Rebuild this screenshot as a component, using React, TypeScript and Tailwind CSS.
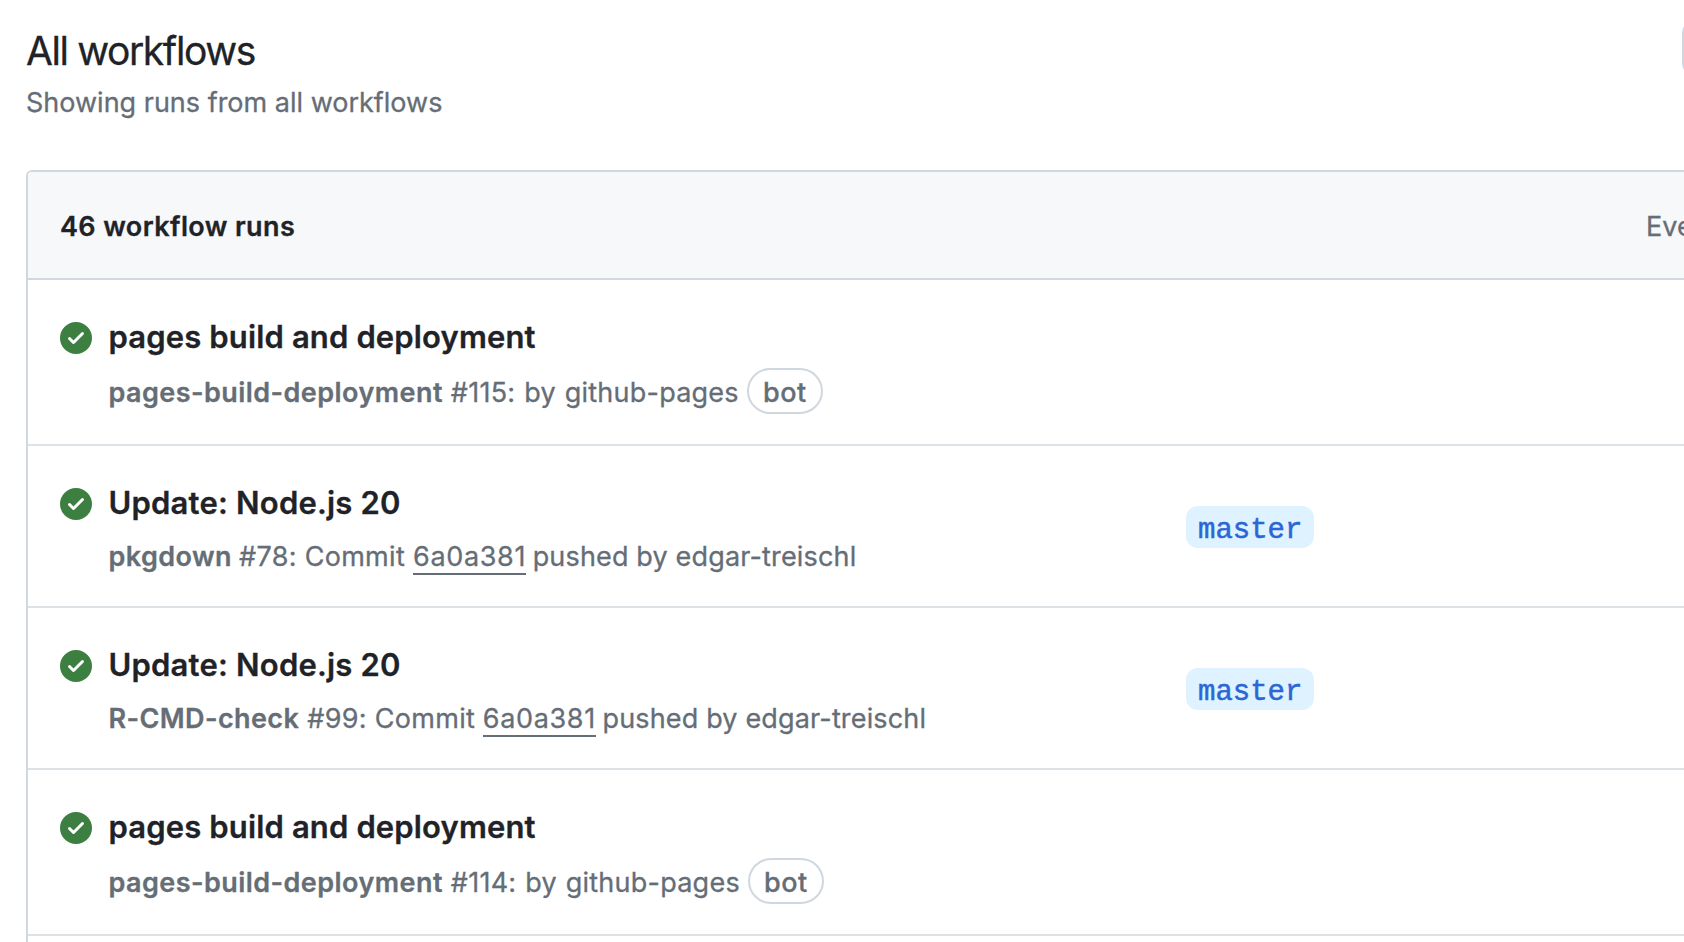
type Run = {
  title: string;
  workflow: string;
  detail: string;
  kind: "bot" | "commit";
  titleClass: string;
  workflowClass: string;
  detailClass: string;
};

const runs: Run[] = [
  {
    title: "pages build and deployment",
    workflow: "pages-build-deployment",
    detail: "#115: by github-pages",
    kind: "bot",
    titleClass: "tracking-[0.14px]",
    workflowClass: "tracking-[0.44px]",
    detailClass: "ml-[8px] w-[296px] tracking-[0.24px] [word-spacing:1px]",
  },
  {
    title: "Update: Node.js 20",
    workflow: "pkgdown",
    detail: "#78: Commit",
    kind: "commit",
    titleClass: "tracking-[0.2px]",
    workflowClass: "tracking-[0.4px]",
    detailClass: "ml-[7.2px] w-[174px] tracking-[0.3px]",
  },
  {
    title: "Update: Node.js 20",
    workflow: "R-CMD-check",
    detail: "#99: Commit",
    kind: "commit",
    titleClass: "tracking-[0.2px]",
    workflowClass: "tracking-[0.4px]",
    detailClass: "ml-[8px] w-[175.6px] tracking-[0.3px]",
  },
  {
    title: "pages build and deployment",
    workflow: "pages-build-deployment",
    detail: "#114: by github-pages",
    kind: "bot",
    titleClass: "tracking-[0.14px]",
    workflowClass: "tracking-[0.44px]",
    detailClass: "ml-[8px] w-[297px] tracking-[0.24px] [word-spacing:1px]",
  },
];

function SuccessIcon() {
  return (
    <svg viewBox="0 0 16 16" className="mt-[5px] mr-4 size-8 shrink-0 fill-[#3d7f40]" aria-hidden="true">
      <path d="M8 16A8 8 0 1 1 8 0a8 8 0 0 1 0 16Zm3.78-9.72a.751.751 0 0 0-.018-1.042.751.751 0 0 0-1.042-.018L6.75 9.19 5.28 7.72a.751.751 0 0 0-1.042.018.751.751 0 0 0-.018 1.042l2 2a.75.75 0 0 0 1.06 0Z" />
    </svg>
  );
}

function RunRow({ run }: { run: Run }) {
  const bot = run.kind === "bot";
  return (
    <li
      className={
        bot
          ? "flex h-[166px] items-start border-b-2 border-[#dde2e7] pl-8 pt-[37px]"
          : "flex h-[162px] items-start border-b-2 border-[#dde2e7] pl-8 pt-[37px]"
      }
    >
      <SuccessIcon />
      <div className="w-[1078px] shrink-0">
        <h2 className={`pl-[0.5px] text-[31px] leading-[40px] font-semibold text-[#1f2328] [-webkit-text-stroke:0.3px_#1f2328] ${run.titleClass}`}>
          {run.title}
        </h2>
        <div
          className={
            bot
              ? "mt-[11px] flex h-[46px] items-center pl-[0.5px] text-[27px] leading-[42px] whitespace-nowrap text-[#656d76] [-webkit-text-stroke:0.3px_#656d76]"
              : "mt-[9px] flex h-[46px] items-center pl-[0.5px] text-[27px] leading-[42px] whitespace-nowrap text-[#656d76] [-webkit-text-stroke:0.3px_#656d76]"
          }
        >
          <span className={`pt-[3px] font-semibold ${run.workflowClass}`}>{run.workflow}</span>
          <span className={`shrink-0 pt-[3px] ${run.detailClass}`}>{run.detail}</span>
          {bot ? (
            <span className="flex h-[46px] w-[76px] shrink-0 justify-center rounded-full border-2 border-[#d0d7de] pt-[2px] font-medium tracking-[0.5px]">
              bot
            </span>
          ) : (
            <>
              <a className="h-[43px] w-[113px] shrink-0 self-start border-b-2 border-[#656d76] pt-[4px] leading-[42px] tracking-[0.64px]">
                6a0a381
              </a>
              <span className="ml-[6.6px] pt-[3px] tracking-[0.16px]">pushed by edgar-treischl</span>
            </>
          )}
        </div>
      </div>
      {!bot && (
        <span className="mt-[23px] h-[42px] w-[128px] rounded-xl bg-[#dff2ff] pt-[4px] pl-3 font-['Liberation_Mono',monospace] text-[29px] leading-[42px] text-[#2b66d4] [-webkit-text-stroke:0.5px_#2b66d4]">
          master
        </span>
      )}
    </li>
  );
}

export default function App() {
  return (
    <main className="h-[942px] w-full overflow-hidden bg-white font-['Inter','Liberation_Sans',sans-serif]">
      <header className="flex h-[170px] items-start justify-between pl-[26px]">
        <div className="pt-[27px]">
          <h1 className="text-[39px] leading-[48px] tracking-[-1.4px] text-[#1f2328] [-webkit-text-stroke:0.3px_#1f2328]">
            All workflows
          </h1>
          <p className="mt-[8px] text-[27px] leading-[40px] text-[#656d76] [-webkit-text-stroke:0.3px_#656d76]">
            Showing runs from all workflows
          </p>
        </div>
        <div className="mt-[21px] -mr-10 h-[54px] w-[42px] shrink-0 rounded-xl border-2 border-[#d0d7de] bg-[#f6f8fa]" />
      </header>
      <section className="ml-[26px] h-[800px] rounded-tl-md border-t-2 border-l-2 border-[#d0d7de]">
        <div className="flex h-[108px] items-center justify-between overflow-hidden rounded-tl-[4px] border-b-2 border-[#d0d7de] bg-[#f6f8fa] pt-[5px] pl-8 text-[27px]">
          <span className="font-semibold tracking-[0.39px] text-[#1f2328] [-webkit-text-stroke:0.3px_#1f2328]">
            46 workflow runs
          </span>
          <span className="w-[38px] shrink-0 text-[#656d76] [-webkit-text-stroke:0.3px_#656d76]">Eve</span>
        </div>
        <ul>
          {runs.map((run, i) => (
            <RunRow key={i} run={run} />
          ))}
        </ul>
      </section>
    </main>
  );
}
